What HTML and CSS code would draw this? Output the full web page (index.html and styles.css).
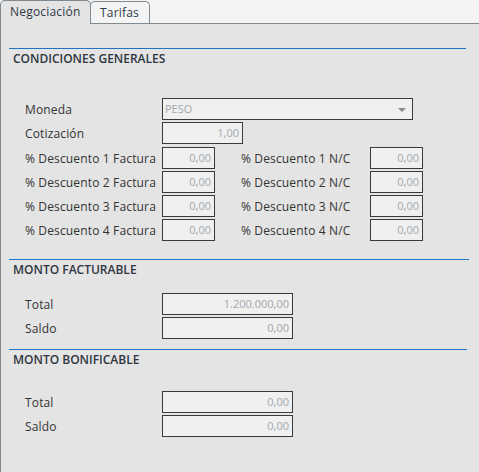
FILE: index.html
```html
<!DOCTYPE html>
<html lang="es">
<head>
    <meta charset="UTF-8">
    <title>Negociación</title>
    <link rel="stylesheet" href="styles.css">
</head>
<body>

<div class="tabs">
    <div class="tab active">Negociación</div>
    <div class="tab tab-tarifas">Tarifas</div>
</div>

<div class="panel">

    <!-- Condiciones generales -->
    <div class="section section-generales">
        <div class="section-title">CONDICIONES GENERALES</div>
        <div class="rows">
            <div class="row">
                <span class="label">Moneda</span>
                <div class="field select">PESO<span class="arrow"></span></div>
            </div>
            <div class="row">
                <span class="label">Cotización</span>
                <div class="field cotizacion">1,00</div>
            </div>
            <div class="row row-first">
                <span class="label">% Descuento 1 Factura</span>
                <div class="field small">0,00</div>
                <span class="label label-nc">% Descuento 1 N/C</span>
                <div class="field small">0,00</div>
            </div>
            <div class="row">
                <span class="label">% Descuento 2 Factura</span>
                <div class="field small">0,00</div>
                <span class="label label-nc">% Descuento 2 N/C</span>
                <div class="field small">0,00</div>
            </div>
            <div class="row">
                <span class="label">% Descuento 3 Factura</span>
                <div class="field small">0,00</div>
                <span class="label label-nc">% Descuento 3 N/C</span>
                <div class="field small">0,00</div>
            </div>
            <div class="row">
                <span class="label">% Descuento 4 Factura</span>
                <div class="field small">0,00</div>
                <span class="label label-nc">% Descuento 4 N/C</span>
                <div class="field small">0,00</div>
            </div>
        </div>
    </div>

    <!-- Monto facturable -->
    <div class="section section-facturable">
        <div class="section-title">MONTO FACTURABLE</div>
        <div class="rows">
            <div class="row">
                <span class="label">Total</span>
                <div class="field monto">1.200.000,00</div>
            </div>
            <div class="row">
                <span class="label">Saldo</span>
                <div class="field monto">0,00</div>
            </div>
        </div>
    </div>

    <!-- Monto bonificable -->
    <div class="section section-bonificable">
        <div class="section-title">MONTO BONIFICABLE</div>
        <div class="rows">
            <div class="row">
                <span class="label">Total</span>
                <div class="field monto">0,00</div>
            </div>
            <div class="row">
                <span class="label">Saldo</span>
                <div class="field monto">0,00</div>
            </div>
        </div>
    </div>

</div>

</body>
</html>
```

FILE: styles.css
```css
body {
    margin: 0;
    padding: 0;
    background-color: #f4f4f4;
    font-family: "Open Sans", Arial, sans-serif;
    font-size: 12px;
    color: #333;
}

/* Pestañas */
.tabs {
    display: flex;
    height: 23px;
    border-bottom: 1px solid #808a92;
}
.tab {
    box-sizing: border-box;
    border: 1px solid #808a92;
    border-bottom: none;
    border-radius: 5px 5px 0 0;
    padding-left: 9px;
    line-height: 22px;
    color: #2f3a48;
    letter-spacing: 0.2px;
}
.active {
    width: 91px;
    height: 24px;
    background-color: #e4e4e4;
    position: relative;
    z-index: 1;
}
.tab-tarifas {
    width: 60px;
    margin-left: -1px;
    margin-top: 1px;
    background-color: #f4f4f4;
}

/* Panel */
.panel {
    height: 448px;
    background-color: #e4e4e4;
    border-left: 1px solid #808a92;
    overflow: hidden;
}
.section {
    margin: 0 13px 0 8px;
    border-top: 1px solid #1f74c4;
}
.section-generales {
    margin-top: 24px;
}
.section-facturable {
    margin-top: 18px;
    margin-right: 10px;
}
.section-bonificable {
    margin-top: 10px;
    margin-right: 12px;
}
.section-title {
    padding-left: 4px;
    margin-top: 2px;
    line-height: 16px;
    font-size: 12px;
    font-weight: 600;
    color: #2f3640;
}
.rows {
    display: flex;
    flex-direction: column;
    gap: 2px;
    padding-left: 16px;
}
.section-generales .rows {
    margin-top: 31px;
}
.section-facturable .rows {
    margin-top: 15px;
}
.section-bonificable .rows {
    margin-top: 23px;
}
.row {
    display: flex;
    align-items: center;
    height: 22px;
}
.row-first {
    margin-top: 1px;
}
.label {
    width: 137px;
    flex-shrink: 0;
    white-space: nowrap;
    letter-spacing: 0.15px;
}
.label-nc {
    width: 129px;
    margin-left: 26px;
}

/* Campos */
.field {
    box-sizing: border-box;
    height: 22px;
    border: 1px solid #3a3a3a;
    background-color: #f0f0f0;
    color: #a3a8ae;
    font-size: 11px;
    line-height: 20px;
    text-align: right;
    padding: 0 3px;
}
.select {
    width: 251px;
    text-align: left;
    padding-left: 2px;
    position: relative;
}
.arrow {
    position: absolute;
    right: 6px;
    top: 9px;
    border-left: 4px solid transparent;
    border-right: 4px solid transparent;
    border-top: 4px solid #8a8a8a;
}
.cotizacion {
    width: 81px;
}
.small {
    width: 53px;
}
.monto {
    width: 131px;
}
```
